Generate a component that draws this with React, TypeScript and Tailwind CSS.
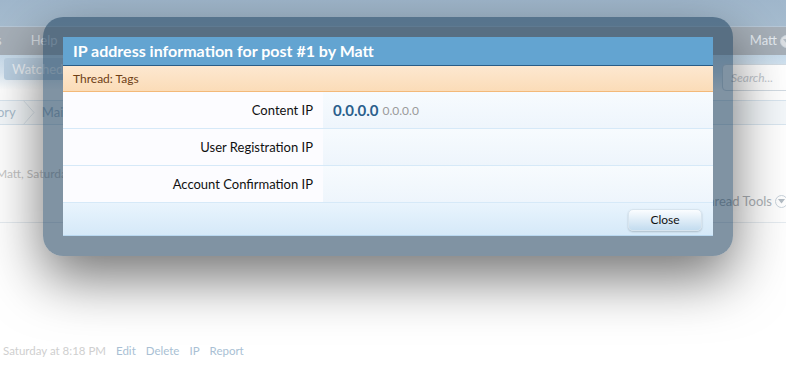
import React from 'react'

const font = { fontFamily: 'Lato, "Trebuchet MS", "DejaVu Sans", sans-serif' }

const rows = [
  { label: 'Content IP', ip: '0.0.0.0', host: '0.0.0.0' },
  { label: 'User Registration IP' },
  { label: 'Account Confirmation IP' },
]

function Caret() {
  return (
    <span className="inline-flex items-center justify-center w-[13px] h-[13px] rounded-full border border-[#c9d3dc] bg-white/60 ml-[3px]">
      <svg width="7" height="5" viewBox="0 0 7 5"><path d="M0 0h7L3.5 4.5z" fill="#b3bcc5" /></svg>
    </span>
  )
}

export default function App() {
  return (
    <div className="relative w-[786px] h-[381px] overflow-hidden bg-white text-[13px]" style={font}>
      {/* page behind the overlay, already faded */}
      <div className="h-[27px] bg-gradient-to-b from-[#a0b7cc] to-[#a6bccf] border-b border-[#b7c8d8]" />
      <div className="h-[28px] bg-[#a6afb8] flex items-center justify-between text-[#d8dee4] text-[13px]">
        <div className="flex gap-[29px] -ml-[4px]"><span>s</span><span>Help</span></div>
        <div className="flex items-center mr-[-7px] text-[#e4eaf0]">Matt<Caret /></div>
      </div>
      <div className="h-[35px] bg-gradient-to-b from-[#c7dbeb] via-[#d9e7f2] to-white flex justify-between">
        <div className="mt-[3px] ml-[4px] h-[22px] px-[8px] rounded-[3px] bg-[#bcd1e3] text-[#edf3f8] leading-[22px]">Watched Threads</div>
        <div className="mt-[9px] mr-[-10px] w-[74px] h-[27px] rounded-[4px] border border-[#d2dbe3] bg-white text-[#c3c9cf] italic leading-[25px] pl-[8px] text-[12px]">Search...</div>
      </div>
      <div className="mt-[10px] h-[25px] border-y border-[#d9e6f0] bg-[#f4f8fb] flex items-center text-[#a9bccd]">
        <span className="-ml-[3px]">ory</span>
        <svg width="18" height="25" viewBox="0 0 18 25" className="mx-[4px]"><path d="M3 0l11 12.5L3 25" fill="none" stroke="#d9e3ea" /></svg>
        <span>Main Category</span>
      </div>
      <div className="mt-[40px] text-[12px] text-[#c5c5c5] -ml-[4px]">Matt, Saturday at 8:18 PM</div>
      <div className="mt-[9px] flex justify-end items-center mr-[-2px] text-[#adb2b7] text-[13px]">Thread Tools<Caret /></div>
      <div className="mt-[10px] border-b border-[#e6ecf1]" />
      <div className="mt-[119px] flex gap-[10px] ml-[3px] text-[11.5px]">
        <span className="text-[#cfcfcf]">Saturday at 8:18 PM</span>
        <span className="text-[#a9bfd4]">Edit</span>
        <span className="text-[#a9bfd4]">Delete</span>
        <span className="text-[#a9bfd4]">IP</span>
        <span className="text-[#a9bfd4]">Report</span>
      </div>

      {/* overlay frame */}
      <div className="absolute left-[43px] top-[17px] w-[690px] h-[239px] rounded-[20px] p-[20px] bg-[rgba(24,59,88,0.55)] shadow-[0_22px_55px_rgba(0,0,0,0.55)]">
        <div className="w-[650px] h-[199px] flex flex-col">
          <div className="h-[29px] bg-[#63a4d1] border-b border-[#2a5d87] text-white font-bold text-[16px] leading-[27px] pl-[10px]">
            IP address information for post #1 by Matt
          </div>
          <div className="h-[26px] bg-gradient-to-b from-[#fde8d0] to-[#fbdcb8] border-b border-[#f3b979] text-[12px] text-[#6f3f16] leading-[25px] pl-[10px]">
            Thread: Tags
          </div>
          {rows.map((r, i) => (
            <div key={i} className="h-[37px] flex border-b border-[#d6e9f8]">
              <div className="w-[260px] bg-[#fcfcff] text-right pr-[10px] text-[#111] leading-[36px]">{r.label}</div>
              <div className="flex-1 bg-gradient-to-b from-[#f7fbfe] to-[#eef5fc] pl-[10px] flex items-center gap-[4px]">
                {r.ip && <span className="font-bold text-[15px] text-[#2b5f8c]">{r.ip}</span>}
                {r.host && <span className="text-[12px] text-[#9a9a9a] mt-[2px]">{r.host}</span>}
              </div>
            </div>
          ))}
          <div className="flex-1 bg-gradient-to-b from-[#e9f4fd] to-[#d5e9f8] border-b border-[#b9d8f0] flex justify-end items-center pr-[11px]">
            <button className="w-[74px] h-[22px] mt-[2px] rounded-[5px] border border-[#d7e4ee] bg-gradient-to-b from-[#fbfdff] to-[#c3dcef] text-[12px] text-[#111] shadow-[0_1px_2px_rgba(0,0,0,0.2)]" style={font}>
              Close
            </button>
          </div>
        </div>
      </div>
    </div>
  )
}
